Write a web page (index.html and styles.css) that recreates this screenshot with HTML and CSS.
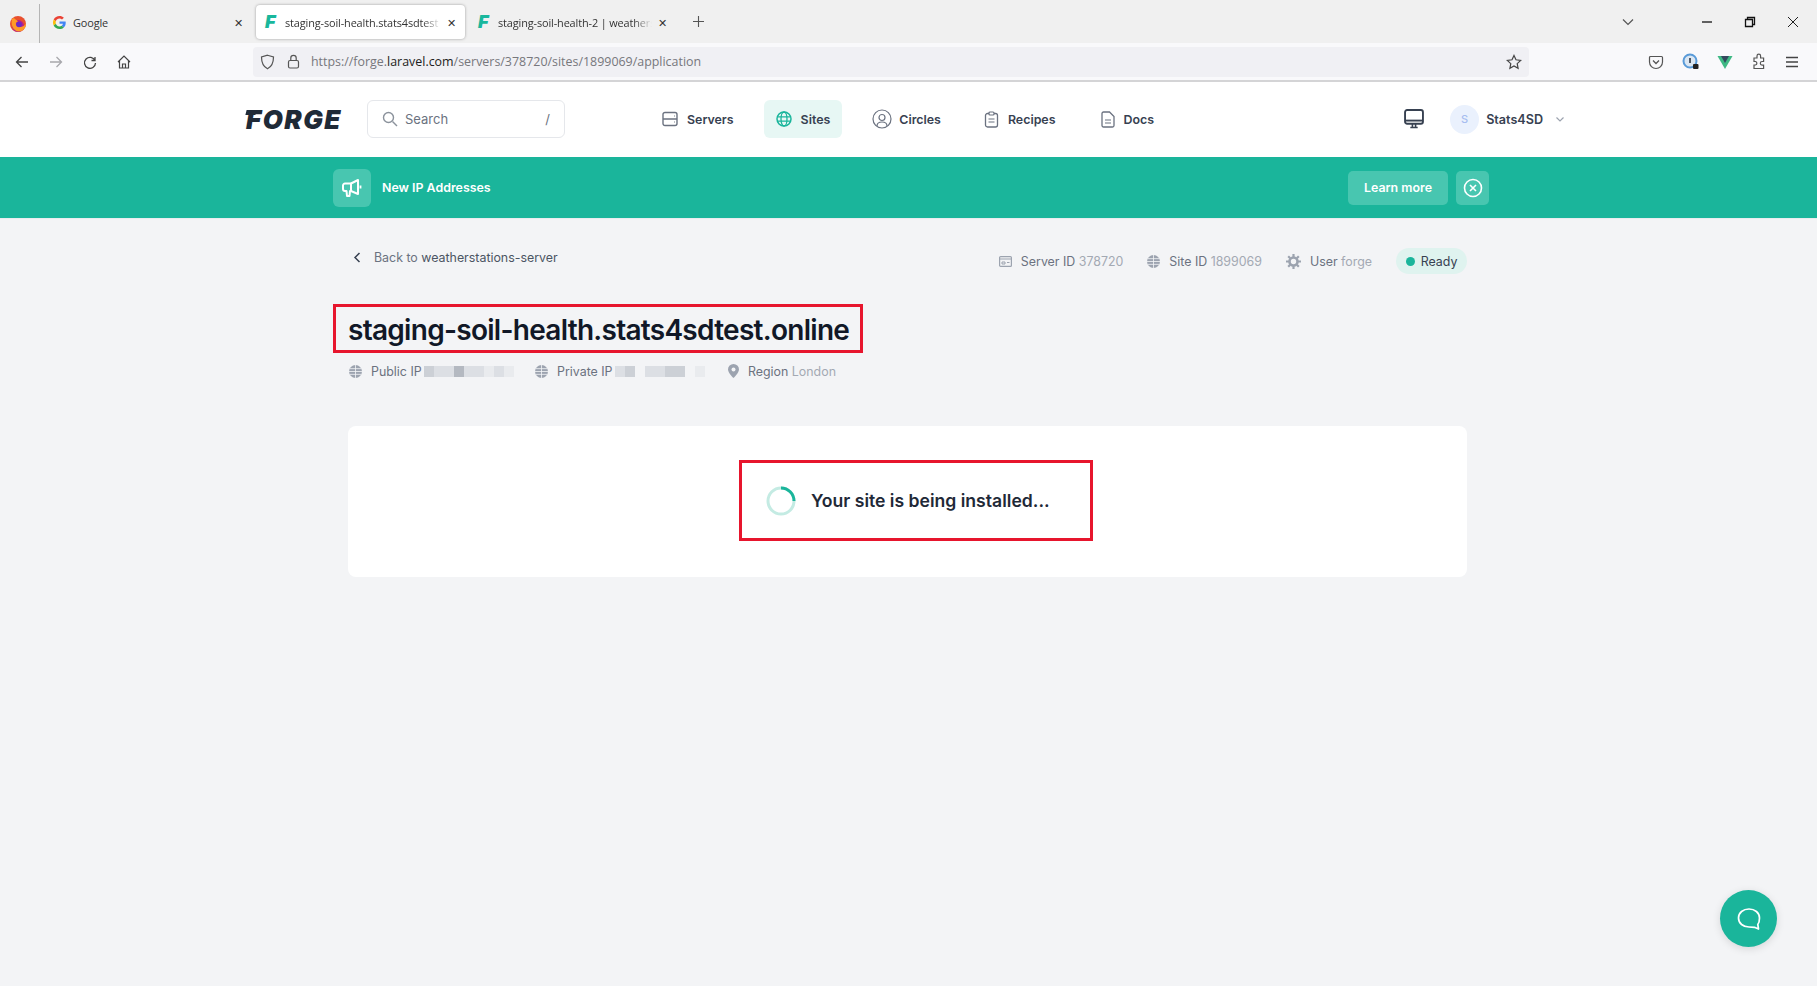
FILE: index.html
```html
<!DOCTYPE html>
<html>

<head>
    <title>staging-soil-health.stats4sdtest.online</title>
    <link rel="stylesheet" href="styles.css">
</head>

<body>
    <!-- browser chrome -->
    <div class="tabbar">
        <div class="ff-cell">
            <svg width="18" height="18" viewBox="0 0 18 18">
                <circle cx="9" cy="9" r="8" fill="#e8502f" />
                <circle cx="9" cy="11" r="6" fill="#b3208f" />
                <path d="M3 4 C2 9 3 15 9 16.5 C14 16.5 17 13 17 8.5 C15 12 11 13 8 11 C6 9 7 7 9 6.5 C8 5 6 4.5 5 3 Z" fill="#ff9a26" />
                <circle cx="10" cy="9.5" r="2.8" fill="#6a2bc4" />
            </svg>
        </div>
        <div class="tab tab-google">
            <svg class="tab-icon" width="13" height="13" viewBox="0 0 48 48">
                <path fill="#EA4335" d="M24 9.5c3.54 0 6.71 1.22 9.21 3.6l6.85-6.85C35.9 2.38 30.47 0 24 0 14.62 0 6.51 5.38 2.56 13.22l7.98 6.19C12.43 13.72 17.74 9.5 24 9.5z" />
                <path fill="#4285F4" d="M46.98 24.55c0-1.57-.15-3.09-.38-4.55H24v9.02h12.94c-.58 2.96-2.26 5.48-4.78 7.18l7.73 6c4.51-4.18 7.09-10.36 7.09-17.65z" />
                <path fill="#FBBC05" d="M10.53 28.59c-.48-1.45-.76-2.99-.76-4.59s.27-3.14.76-4.59l-7.98-6.19C.92 16.46 0 20.12 0 24c0 3.88.92 7.54 2.56 10.78l7.97-6.19z" />
                <path fill="#34A853" d="M24 48c6.48 0 11.93-2.13 15.89-5.81l-7.73-6c-2.15 1.45-4.92 2.3-8.16 2.3-6.26 0-11.57-4.22-13.47-9.91l-7.98 6.19C6.51 42.62 14.62 48 24 48z" />
            </svg>
            <span class="tab-title">Google</span>
            <span class="tab-close">✕</span>
        </div>
        <div class="tab tab-active">
            <span class="tab-f">F</span>
            <span class="tab-title fade">staging-soil-health.stats4sdtest</span>
            <span class="tab-close">✕</span>
        </div>
        <div class="tab tab-third">
            <span class="tab-f">F</span>
            <span class="tab-title fade">staging-soil-health-2 | weathers</span>
            <span class="tab-close">✕</span>
        </div>
        <svg class="new-tab" width="13" height="13" viewBox="0 0 13 13">
            <path d="M6.5 1v11M1 6.5h11" stroke="#555" stroke-width="1.1" />
        </svg>
        <div class="win-controls">
            <svg class="tab-list" width="14" height="14" viewBox="0 0 14 14">
                <path d="M2 4.5l5 5 5-5" fill="none" stroke="#555" stroke-width="1.2" />
            </svg>
            <svg width="12" height="12" viewBox="0 0 12 12">
                <path d="M1 6h10" stroke="#111" stroke-width="1.3" />
            </svg>
            <svg width="12" height="12" viewBox="0 0 12 12">
                <path d="M1.5 3.5h7v7h-7zM3.5 3.5V1.5h7v7h-2" fill="none" stroke="#111" stroke-width="1.3" />
            </svg>
            <svg width="12" height="12" viewBox="0 0 12 12">
                <path d="M1 1l10 10M11 1L1 11" stroke="#222" stroke-width="1" />
            </svg>
        </div>
    </div>

    <div class="toolbar">
        <div class="tool-nav">
            <svg width="16" height="16" viewBox="0 0 16 16">
                <path d="M14 8H2.5M7.5 3l-5 5 5 5" fill="none" stroke="#444" stroke-width="1.3" />
            </svg>
            <svg width="16" height="16" viewBox="0 0 16 16">
                <path d="M2 8h11.5M8.5 3l5 5-5 5" fill="none" stroke="#a8a8ac" stroke-width="1.3" />
            </svg>
            <svg width="16" height="16" viewBox="0 0 16 16">
                <path d="M13 3v3.5H9.5M13 6.5A5.5 5.5 0 1 0 13.5 9" fill="none" stroke="#444" stroke-width="1.3" />
            </svg>
            <svg width="16" height="16" viewBox="0 0 16 16">
                <path d="M2 8l6-6 6 6M3.5 7v7h9V7M6.5 14v-4h3v4" fill="none" stroke="#444" stroke-width="1.2" />
            </svg>
        </div>
        <div class="urlbar">
            <svg width="15" height="16" viewBox="0 0 15 16">
                <path d="M7.5 1.2L13.5 3c0 6-1.5 9.500-6 11.800C3 12.500 1.500 9 1.500 3z" fill="none" stroke="#555" stroke-width="1.2" />
            </svg>
            <svg class="url-lock" width="13" height="15" viewBox="0 0 13 15">
                <rect x="1.500" y="6.500" width="10" height="7.500" rx="1.500" fill="none" stroke="#555" stroke-width="1.200" />
                <path d="M3.800 6.500V4a2.700 2.700 0 0 1 5.400 0v2.500" fill="none" stroke="#555" stroke-width="1.200" />
            </svg>
            <span class="url-text">https://forge.<b>laravel.com</b>/servers/378720/sites/1899069/application</span>
            <svg class="url-star" width="16" height="16" viewBox="0 0 16 16">
                <path d="M8 1.500l2 4.300 4.700.6-3.500 3.200.9 4.700L8 12l-4.100 2.300.9-4.700L1.300 6.400 6 5.800z" fill="none" stroke="#444" stroke-width="1.200" />
            </svg>
        </div>
        <div class="tool-right">
            <svg width="16" height="16" viewBox="0 0 16 16">
                <path d="M2.500 2.500h11a1 1 0 0 1 1 1V8a6.500 6.500 0 0 1-13 0V3.500a1 1 0 0 1 1-1z" fill="none" stroke="#555" stroke-width="1.200" />
                <path d="M5 6.500l3 3 3-3" fill="none" stroke="#555" stroke-width="1.300" />
            </svg>
            <svg width="17" height="17" viewBox="0 0 17 17">
                <circle cx="8" cy="8" r="6.500" fill="#dbe7f3" stroke="#5a9bd8" stroke-width="2" />
                <path d="M8 5v5" stroke="#1f2a37" stroke-width="1.500" />
                <rect x="11" y="11" width="5.500" height="5" rx="1" fill="#222" />
            </svg>
            <svg width="16" height="16" viewBox="0 0 16 16">
                <path d="M0.500 2h15L8 15z" fill="#3fb984" />
                <path d="M4 2h8L8 9z" fill="#34495e" />
            </svg>
            <svg width="16" height="17" viewBox="0 0 16 17">
                <path d="M3 5h3V3a1.800 1.800 0 0 1 3.600 0v2h3v3.500h-1.500a1.800 1.800 0 0 0 0 3.600h1.500V15.500H3V12h1.500a1.800 1.800 0 0 0 0-3.500H3z" fill="none" stroke="#555" stroke-width="1.200" />
            </svg>
            <svg width="14" height="14" viewBox="0 0 14 14">
                <path d="M1 2.500h12M1 7h12M1 11.500h12" stroke="#444" stroke-width="1.400" />
            </svg>
        </div>
    </div>

    <!-- forge nav -->
    <div class="nav">
        <div class="logo">FORGE</div>
        <div class="search">
            <svg width="16" height="16" viewBox="0 0 16 16">
                <circle cx="6.500" cy="6.500" r="5" fill="none" stroke="#8b929c" stroke-width="1.400" />
                <path d="M10.500 10.500L15 15" stroke="#8b929c" stroke-width="1.400" />
            </svg>
            <span class="search-label">Search</span>
            <span class="search-key">/</span>
        </div>
        <div class="menu">
            <a class="menu-item">
                <svg width="16" height="16" viewBox="0 0 16 16">
                    <rect x="1" y="1.500" width="14" height="13" rx="2" fill="none" stroke="#6b7280" stroke-width="1.400" />
                    <path d="M1 8h14M12 5h.6M12 11h.6" stroke="#6b7280" stroke-width="1.400" />
                </svg>
                Servers
            </a>
            <a class="menu-item menu-active">
                <svg width="16" height="16" viewBox="0 0 16 16">
                    <circle cx="8" cy="8" r="7" fill="none" stroke="#1ab59b" stroke-width="1.500" />
                    <ellipse cx="8" cy="8" rx="3" ry="7" fill="none" stroke="#1ab59b" stroke-width="1.300" />
                    <path d="M1 5.800h14M1 10.200h14" stroke="#1ab59b" stroke-width="1.300" />
                </svg>
                Sites
            </a>
            <a class="menu-item menu-circles">
                <svg width="20" height="20" viewBox="0 0 20 20">
                    <circle cx="10" cy="10" r="9" fill="none" stroke="#6b7280" stroke-width="1.200" />
                    <circle cx="10" cy="8.500" r="3" fill="none" stroke="#6b7280" stroke-width="1.200" />
                    <path d="M5 17c0-3 2-4 5-4s5 1 5 4" fill="none" stroke="#6b7280" stroke-width="1.200" />
                </svg>
                Circles
            </a>
            <a class="menu-item menu-recipes">
                <svg width="15" height="17" viewBox="0 0 15 17">
                    <rect x="1.500" y="2.500" width="12" height="13.500" rx="2" fill="none" stroke="#6b7280" stroke-width="1.300" />
                    <rect x="5" y="1" width="5" height="3" rx="1" fill="#fff" stroke="#6b7280" stroke-width="1.200" />
                    <path d="M4.500 8h6M4.500 11h6" stroke="#6b7280" stroke-width="1.200" />
                </svg>
                Recipes
            </a>
            <a class="menu-item menu-docs">
                <svg width="14" height="17" viewBox="0 0 14 17">
                    <path d="M2.500 1h6L13 5.500V14.500a1.500 1.500 0 0 1-1.500 1.500h-9A1.500 1.500 0 0 1 1 14.500v-12A1.500 1.500 0 0 1 2.500 1z" fill="none" stroke="#6b7280" stroke-width="1.300" />
                    <path d="M4 9h6M4 12h6" stroke="#6b7280" stroke-width="1.200" />
                </svg>
                Docs
            </a>
        </div>
        <div class="account">
            <svg width="20" height="20" viewBox="0 0 19 19">
                <rect x="1" y="1" width="17" height="13" rx="2" fill="none" stroke="#374151" stroke-width="1.800" />
                <path d="M1 11h17" stroke="#374151" stroke-width="1.800" />
                <path d="M6 17.500h7M8 14v3.500M11 14v3.500" stroke="#374151" stroke-width="1.500" />
            </svg>
            <div class="avatar">S</div>
            <span class="account-name">Stats4SD</span>
            <svg width="10" height="10" viewBox="0 0 10 10">
                <path d="M1.500 3.500L5 7l3.500-3.500" fill="none" stroke="#9ca3af" stroke-width="1.200" />
            </svg>
        </div>
    </div>

    <div class="banner">
        <div class="banner-icon">
            <svg width="20" height="20" viewBox="0 0 20 20">
                <path d="M3 5.500h6V13H8l-.5 5h-2.500l-.5-5H3a2 2 0 0 1-2-2V7.500a2 2 0 0 1 2-2z" fill="none" stroke="#fff" stroke-width="2" stroke-linejoin="round" />
                <path d="M9 5.500l7-3.500v14l-7-3" fill="none" stroke="#fff" stroke-width="2" stroke-linejoin="round" />
                <path d="M18.500 7.500v3" stroke="#fff" stroke-width="1.800" />
            </svg>
        </div>
        <span class="banner-text">New IP Addresses</span>
        <a class="banner-btn">Learn more</a>
        <a class="banner-close">
            <svg width="20" height="20" viewBox="0 0 20 20">
                <circle cx="10" cy="10" r="8.500" fill="none" stroke="#fff" stroke-width="1.600" />
                <path d="M7 7l6 6M13 7l-6 6" stroke="#fff" stroke-width="1.600" />
            </svg>
        </a>
    </div>

    <!-- page content -->
    <div class="content">
        <div class="topline">
            <a class="back">
                <svg width="9" height="11" viewBox="0 0 9 11">
                    <path d="M6.500 1L2 5.500 6.500 10" fill="none" stroke="#374151" stroke-width="1.500" />
                </svg>
                <span>Back to <span class="back-name">weatherstations-server</span></span>
            </a>
            <div class="site-meta">
                <span class="meta-item">
                    <svg width="13" height="11" viewBox="0 0 13 11">
                        <rect x="0.600" y="0.600" width="11.800" height="9.800" rx="1" fill="none" stroke="#9ca3af" stroke-width="1.200" />
                        <path d="M0.600 3h11.800M3 6h3v2H3zM8 6.500h2.500" stroke="#9ca3af" stroke-width="1" fill="none" />
                    </svg>
                    <span>Server ID <em>378720</em></span>
                </span>
                <span class="meta-item">
                    <svg class="globe" width="13" height="13" viewBox="0 0 16 16">
                        <circle cx="8" cy="8" r="8" fill="#9ca3af" />
                        <path d="M8 0v16M0 8h16M1 4.500h14M1 11.500h14" stroke="#f3f4f6" stroke-width="1" />
                    </svg>
                    <span>Site ID <em>1899069</em></span>
                </span>
                <span class="meta-item">
                    <svg width="15" height="15" viewBox="0 0 15 15">
                        <circle cx="7.500" cy="7.500" r="4" fill="none" stroke="#9ca3af" stroke-width="2.600" />
                        <path d="M7.500 0v3M7.500 12v3M0 7.500h3M12 7.500h3M2.200 2.200l2 2M10.800 10.800l2 2M12.800 2.200l-2 2M4.200 10.800l-2 2" stroke="#9ca3af" stroke-width="2.200" />
                    </svg>
                    <span>User <em>forge</em></span>
                </span>
                <span class="status"><i class="status-dot"></i>Ready</span>
            </div>
        </div>

        <h1 class="site-title annotated">staging-soil-health.stats4sdtest.online</h1>

        <div class="server-meta">
            <span class="meta-item public-ip">
                <svg class="globe" width="13" height="13" viewBox="0 0 16 16">
                    <circle cx="8" cy="8" r="8" fill="#9ca3af" />
                    <path d="M8 0v16M0 8h16M1 4.500h14M1 11.500h14" stroke="#f3f4f6" stroke-width="1" />
                </svg>
                Public IP
                <span class="pixels">
                    <i class="px-b"></i><i class="px-c"></i><i class="px-c"></i><i class="px-a"></i><i class="px-c"></i><i class="px-c"></i><i class="px-d"></i><i class="px-c"></i><i class="px-d"></i>
                </span>
            </span>
            <span class="meta-item private-ip">
                <svg class="globe" width="13" height="13" viewBox="0 0 16 16">
                    <circle cx="8" cy="8" r="8" fill="#9ca3af" />
                    <path d="M8 0v16M0 8h16M1 4.500h14M1 11.500h14" stroke="#f3f4f6" stroke-width="1" />
                </svg>
                Private IP
                <span class="pixels">
                    <i class="px-c"></i><i class="px-b"></i><i class="px-n"></i><i class="px-c"></i><i class="px-c"></i><i class="px-b"></i><i class="px-b"></i><i class="px-n"></i><i class="px-d"></i>
                </span>
            </span>
            <span class="meta-item">
                <svg width="11" height="14" viewBox="0 0 11 14">
                    <path d="M5.500 0a5.500 5.500 0 0 1 5.500 5.500C11 9 5.500 14 5.500 14S0 9 0 5.500A5.500 5.500 0 0 1 5.500 0z" fill="#9ca3af" />
                    <circle cx="5.500" cy="5.500" r="2" fill="#f3f4f6" />
                </svg>
                <span>Region <em>London</em></span>
            </span>
        </div>

        <div class="card">
            <div class="install-note annotated">
                <svg class="spinner" width="30" height="30" viewBox="0 0 30 30">
                    <circle cx="15" cy="15" r="13" fill="none" stroke="#c4ebe3" stroke-width="3" />
                    <path d="M15 2a13 13 0 0 1 13 13" fill="none" stroke="#1ab59b" stroke-width="3" />
                </svg>
                <span>Your site is being installed...</span>
            </div>
        </div>
    </div>

    <a class="chat-button">
        <svg width="24" height="24" viewBox="0 0 24 24">
            <path d="M12 2C6.200 2 1.500 5.600 1.500 11s4.700 9 10.500 9c1.500 0 4 0 5.500.3L21.500 22 20.800 17.500C22 16 22.500 13.500 22.500 11 22.500 5.600 17.800 2 12 2z" fill="none" stroke="#fff" stroke-width="1.700" stroke-linejoin="round" />
        </svg>
    </a>
</body>

</html>
```

FILE: styles.css
```css
html,
body {
    height: 100%;
    margin: 0;
}

body {
    font-family: 'Inter', 'Noto Sans', sans-serif;
    background-color: #f3f4f6;
    color: #1f2937;
    overflow: hidden;
    position: relative;
}

a {
    color: inherit;
    text-decoration: none;
}

/* browser chrome */
.tabbar {
    height: 43px;
    background-color: #f0f0f0;
    display: flex;
    align-items: center;
    font-family: 'Open Sans', sans-serif;
    font-size: 10.9px;
    color: #333;
}

.ff-cell {
    width: 40px;
    height: 39px;
    margin-top: 4px;
    border-right: 1px solid #b5b5b5;
    display: flex;
    align-items: center;
    padding-left: 9px;
    box-sizing: border-box;
}

.tab {
    height: 34px;
    display: flex;
    align-items: center;
    box-sizing: border-box;
    margin-top: 1px;
}

.tab-google {
    width: 216px;
    padding: 0 13px 0 13px;
}

.tab-icon {
    margin-right: 7px;
    margin-left: 0;
}

.tab-active {
    width: 209px;
    padding: 0 9px 0 8px;
    background-color: #ffffff;
    border-radius: 4px;
    box-shadow: 0 0 3px rgba(0, 0, 0, 0.35);
}

.tab-third {
    width: 212px;
    padding: 0 10px 0 10px;
}

.tab-f {
    font-family: 'Inter', sans-serif;
    font-weight: 900;
    font-style: italic;
    font-size: 18px;
    color: #19b79c;
    width: 21px;
    padding-left: 1px;
    box-sizing: border-box;
    flex-shrink: 0;
    line-height: 1;
}

.tab-third .tab-f {
    width: 23px;
    padding-left: 3px;
}

.tab-title {
    flex: 1;
    white-space: nowrap;
    overflow: hidden;
    letter-spacing: -0.12px;
}

.fade {
    -webkit-mask-image: linear-gradient(to right, #000 88%, transparent 100%);
    mask-image: linear-gradient(to right, #000 88%, transparent 100%);
}

.tab-close {
    font-size: 11px;
    color: #333;
    margin-left: 6px;
    flex-shrink: 0;
}

.new-tab {
    margin-left: 15px;
}

.win-controls {
    margin-left: auto;
    display: flex;
    align-items: center;
    gap: 31px;
    padding-right: 18px;
}

.tab-list {
    margin-right: 35px;
}

.toolbar {
    height: 37px;
    background-color: #f9f9fb;
    border-bottom: 2px solid #d4d4d6;
    display: flex;
    align-items: center;
    font-family: 'Open Sans', sans-serif;
}

.tool-nav {
    width: 253px;
    padding-left: 14px;
    box-sizing: border-box;
    display: flex;
    align-items: center;
    gap: 18px;
}

.urlbar {
    width: 1276px;
    height: 30px;
    background-color: #f0f0f4;
    border-radius: 4px;
    display: flex;
    align-items: center;
    padding: 0 7px 0 7px;
    box-sizing: border-box;
}

.url-lock {
    margin-left: 12px;
}

.url-text {
    margin-left: 11px;
    font-size: 12.43px;
    color: #77777c;
}

.url-text b {
    font-weight: 400;
    color: #1d1d20;
}

.url-star {
    margin-left: auto;
}

.tool-right {
    display: flex;
    align-items: center;
    gap: 18px;
    margin-left: 119px;
}

/* forge nav */
.nav {
    height: 75px;
    background-color: #ffffff;
    display: flex;
    align-items: center;
    padding: 0 252px 1px 246px;
    box-sizing: border-box;
}

.logo {
    width: 96px;
    position: relative;
    font-family: 'Inter', sans-serif;
    font-weight: 900;
    font-style: italic;
    font-size: 26px;
    letter-spacing: 1.5px;
    color: #1f2a37;
    white-space: nowrap;
}

/* long top bar of the F */
.logo::before {
    content: "";
    position: absolute;
    left: 0;
    top: 6px;
    width: 10px;
    height: 5px;
    background-color: #1f2a37;
    transform: skewX(-14deg);
}

.search {
    width: 198px;
    height: 38px;
    margin-left: 25px;
    border: 1px solid #e5e7eb;
    border-radius: 6px;
    box-sizing: border-box;
    display: flex;
    align-items: center;
    padding: 0 14px;
    font-size: 13px;
    color: #6b7280;
}

.search-label {
    margin-left: 7px;
}

.search-key {
    margin-left: auto;
}

.menu {
    display: flex;
    align-items: center;
    gap: 18px;
    margin-left: 85px;
}

.menu-item {
    height: 38px;
    padding: 0 12px;
    display: flex;
    align-items: center;
    gap: 9px;
    font-size: 12.4px;
    font-weight: 600;
    color: #374151;
    border-radius: 6px;
}

.menu-active {
    background-color: #e7f7f4;
}

.menu-circles svg {
    margin-right: -2px;
}

.menu-recipes {
    margin-left: 1px;
}

.menu-docs {
    margin-left: 3px;
}

.account {
    margin-left: auto;
    display: flex;
    align-items: center;
    font-size: 12.6px;
    font-weight: 600;
    color: #374151;
}

.avatar {
    width: 29px;
    height: 29px;
    margin-left: 26px;
    border-radius: 50%;
    background-color: #eaf1fd;
    color: #a7bdf0;
    font-size: 11px;
    font-weight: 500;
    display: flex;
    align-items: center;
    justify-content: center;
}

.account-name {
    margin: 0 12px 0 7px;
}

/* announcement */
.banner {
    height: 62px;
    background-color: #1ab59b;
    border-bottom: 1px solid #e9ecef;
    display: flex;
    align-items: center;
    padding: 0 328px 0 333px;
    box-sizing: border-box;
    color: #ffffff;
    font-size: 12.4px;
    font-weight: 600;
}

.banner-icon {
    width: 38px;
    height: 38px;
    border-radius: 6px;
    background-color: #48c6b0;
    display: flex;
    align-items: center;
    justify-content: center;
}

.banner-text {
    margin-left: 11px;
}

.banner-btn {
    margin-left: auto;
    width: 100px;
    height: 34px;
    border-radius: 5px;
    background-color: #48c6b0;
    display: flex;
    align-items: center;
    justify-content: center;
}

.banner-close {
    margin-left: 8px;
    width: 33px;
    height: 34px;
    border-radius: 5px;
    background-color: #48c6b0;
    display: flex;
    align-items: center;
    justify-content: center;
}

/* page */
.content {
    width: 1119px;
    margin: 0 0 0 348px;
}

.topline {
    display: flex;
    justify-content: space-between;
    margin-top: 29px;
    height: 26px;
}

.back {
    display: flex;
    align-items: center;
    height: 18px;
    padding-left: 5px;
    font-size: 12.4px;
    color: #6b7280;
    white-space: pre;
}

.back svg {
    margin-right: 12px;
}

.back-name {
    color: #4b5563;
}

.site-meta {
    display: flex;
    align-items: center;
    gap: 24px;
}

.meta-item {
    display: flex;
    align-items: center;
    gap: 9px;
    font-size: 12.4px;
    color: #6b7280;
    white-space: nowrap;
}

.meta-item em {
    font-style: normal;
    color: #a3a9b3;
}

.status {
    width: 71px;
    height: 26px;
    box-sizing: border-box;
    border-radius: 13px;
    background-color: #dff3ef;
    display: flex;
    align-items: center;
    justify-content: center;
    gap: 6px;
    font-size: 12.4px;
    color: #374151;
}

.status-dot {
    width: 9px;
    height: 9px;
    border-radius: 50%;
    background-color: #1ab59b;
}

.annotated {
    border: 3px solid #e7152d;
    box-sizing: border-box;
}

.site-title {
    width: 530px;
    height: 49px;
    margin: 30px 0 0 -15px;
    padding: 2px 0 0 12px;
    display: flex;
    align-items: center;
    font-size: 28px;
    font-weight: 600;
    letter-spacing: -0.72px;
    color: #111827;
    white-space: nowrap;
}

.server-meta {
    display: flex;
    align-items: center;
    height: 18px;
    margin-top: 9px;
    padding-left: 1px;
}

.public-ip {
    width: 186px;
}

.private-ip {
    width: 193px;
}

.pixels {
    display: flex;
    margin-left: -7px;
    height: 11px;
}

.pixels i {
    width: 10px;
    height: 11px;
}

.px-a {
    background-color: #b4b9c1;
}

.px-b {
    background-color: #ccd0d6;
}

.px-c {
    background-color: #dcdfe4;
}

.px-d {
    background-color: #e9ebee;
}

.px-n {
    background-color: transparent;
}

.card {
    margin-top: 46px;
    height: 151px;
    background-color: #ffffff;
    border-radius: 8px;
    display: flex;
    align-items: center;
    padding: 0 0 2px 391px;
    box-sizing: border-box;
}

.install-note {
    width: 354px;
    height: 81px;
    display: flex;
    align-items: center;
    padding-left: 24px;
    font-size: 17.6px;
    font-weight: 600;
    color: #1f2937;
}

.spinner {
    margin-right: 15px;
    flex-shrink: 0;
}

.chat-button {
    position: absolute;
    right: 40px;
    bottom: 39px;
    width: 57px;
    height: 57px;
    border-radius: 50%;
    background-color: #1ab59b;
    box-shadow: 0 2px 8px rgba(0, 0, 0, 0.12);
    display: flex;
    align-items: center;
    justify-content: center;
}
```
